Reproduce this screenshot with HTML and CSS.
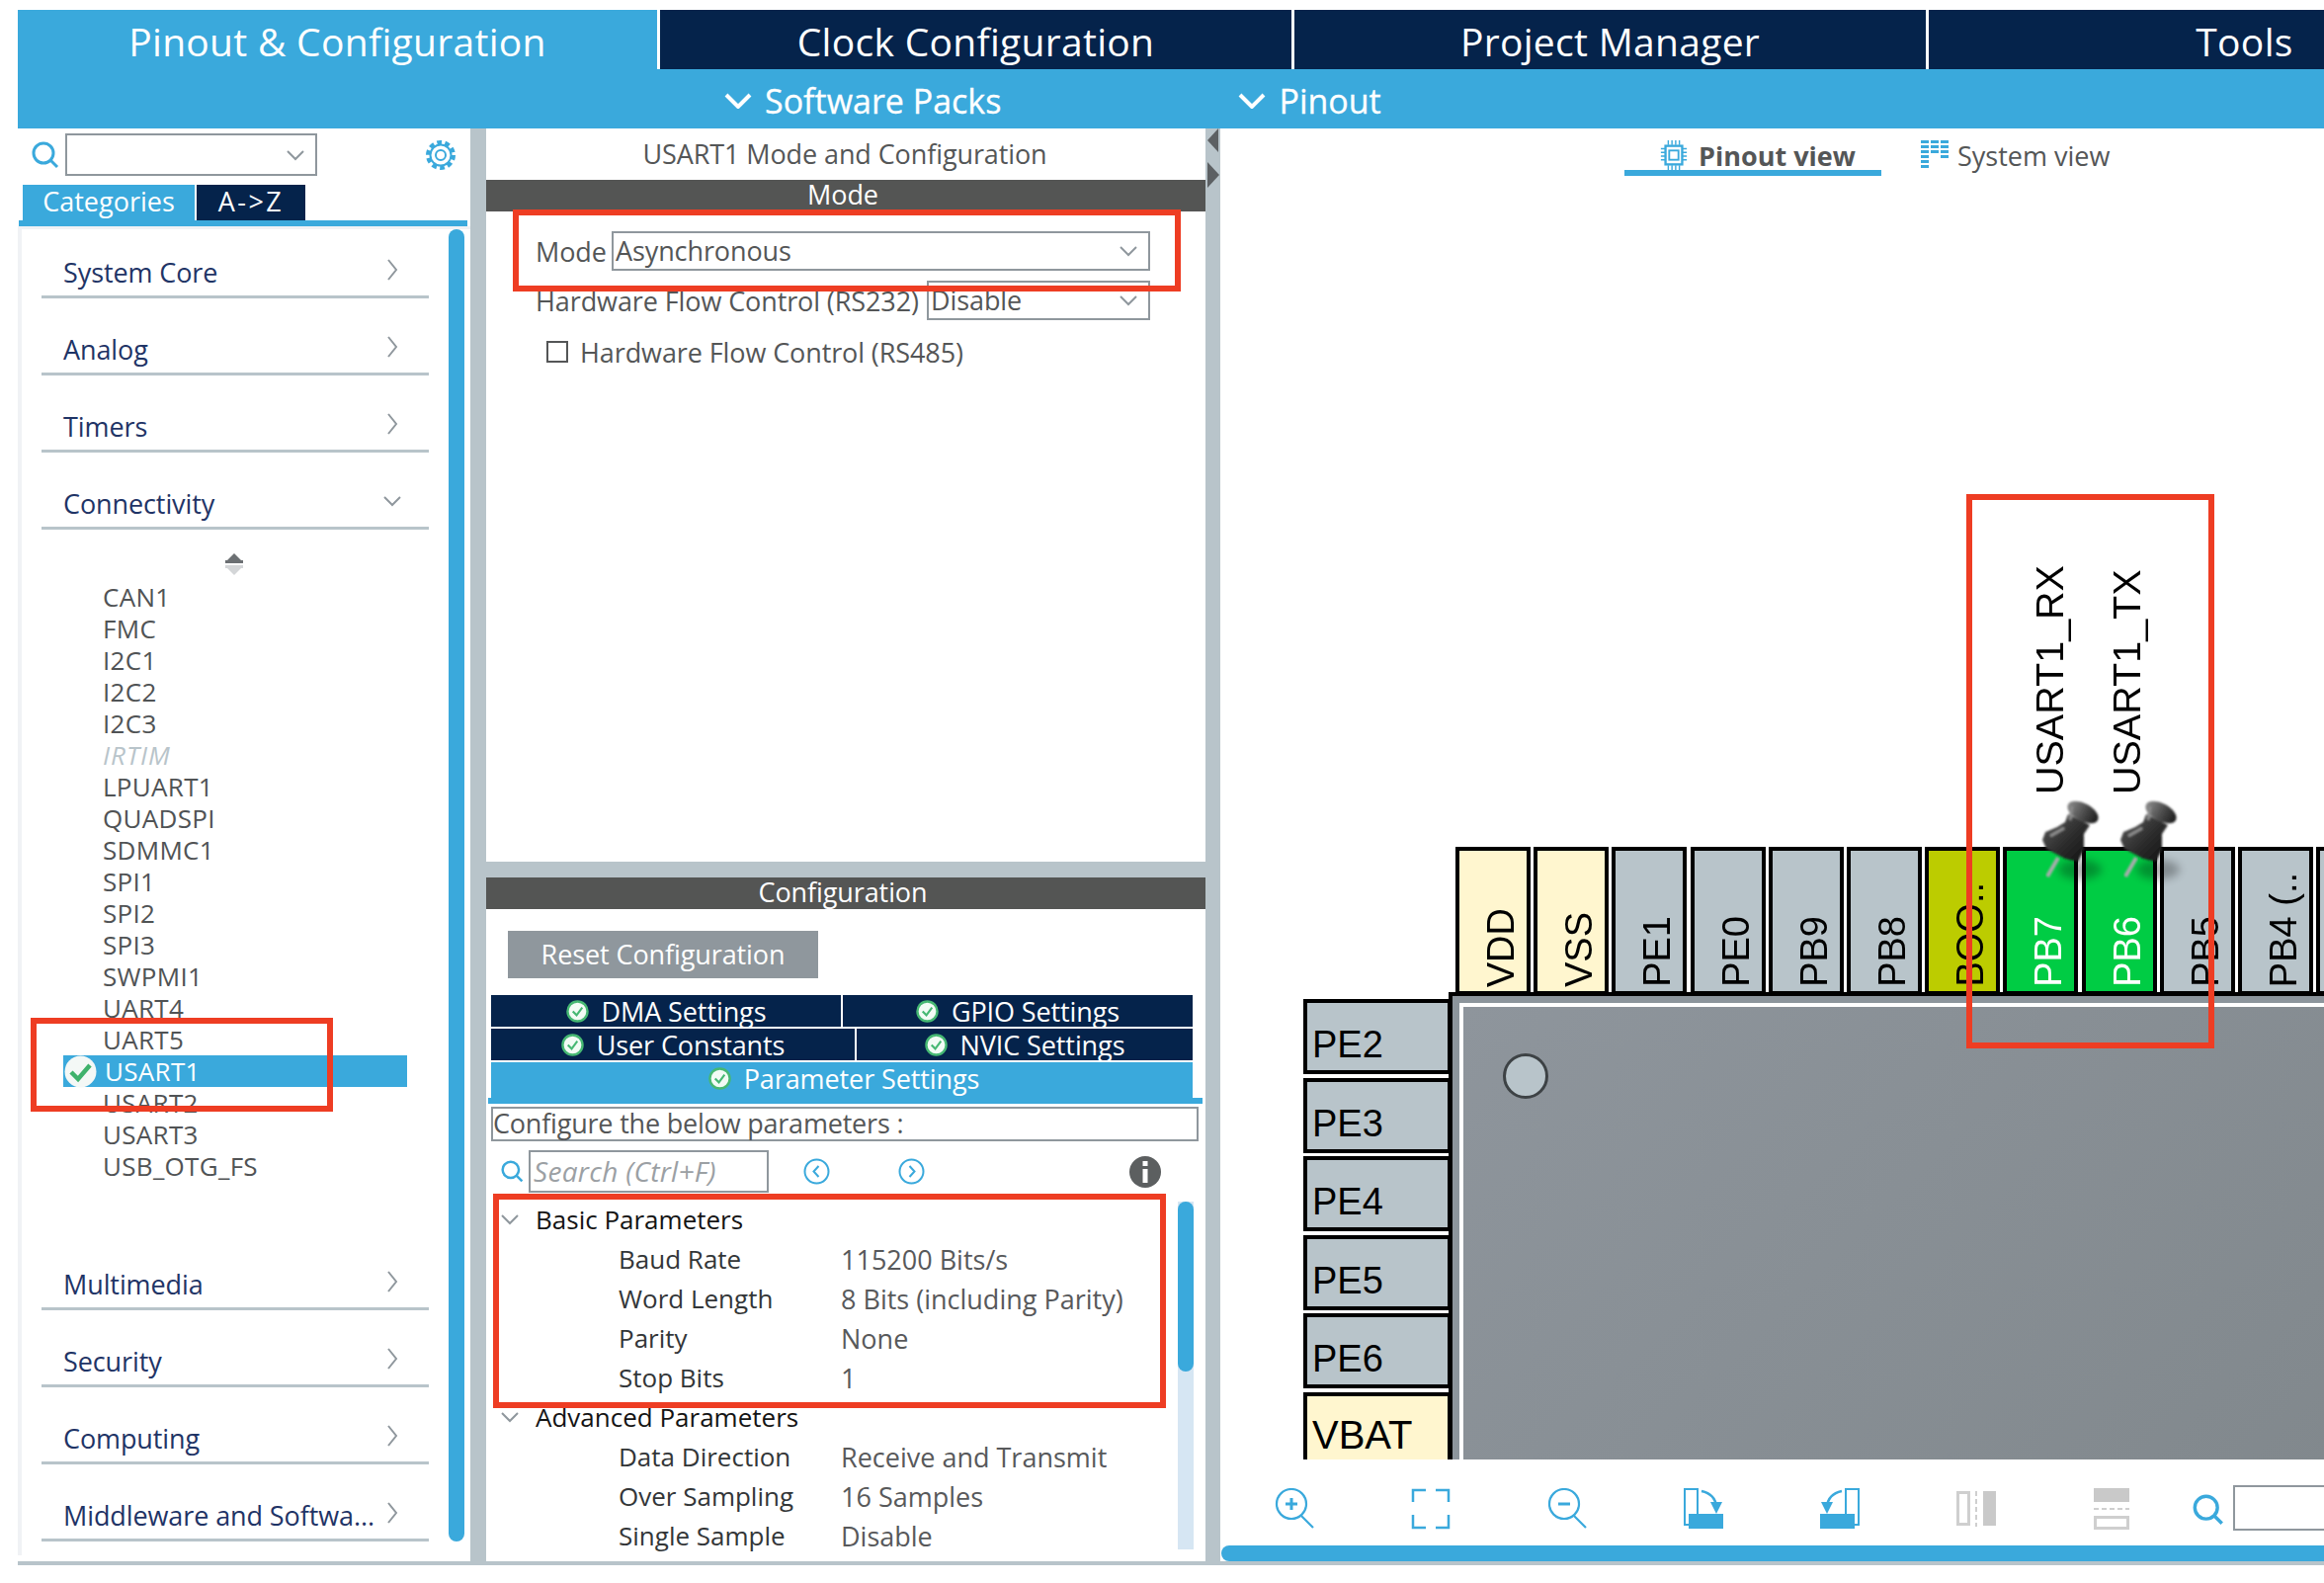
FILE: index.html
```html
<!DOCTYPE html>
<html lang="en">
<head>
<meta charset="utf-8">
<title>Pinout &amp; Configuration</title>
<link rel="stylesheet" href="styles.css">
</head>
<body>
<svg class="defs" width="0" height="0" aria-hidden="true">
  <defs>
    <symbol id="chev-d" viewBox="0 0 20 12"><path d="M2 2l8 8 8-8" fill="none" stroke="currentColor" stroke-width="2"/></symbol>
    <symbol id="chev-r" viewBox="0 0 12 24"><path d="M2 2l8 10-8 10" fill="none" stroke="currentColor" stroke-width="2"/></symbol>
    <symbol id="lens" viewBox="0 0 28 28"><circle cx="12" cy="12" r="10" fill="none" stroke="currentColor" stroke-width="3"/><path d="M19 19l7 7" stroke="currentColor" stroke-width="3"/></symbol>
    <symbol id="ok" viewBox="0 0 24 24"><circle cx="12" cy="12" r="10.5" fill="#f2fbf5" stroke="#46b873" stroke-width="2.5"/><path d="M7 12l4 4 6-8" fill="none" stroke="#46b873" stroke-width="2.2"/></symbol>
    <symbol id="needle-pin" viewBox="0 0 70 90">
      <ellipse cx="40" cy="72" rx="22" ry="10" fill="#000" opacity=".28" filter="url(#soft)"/>
      <path d="M18 60L7 79" stroke="#a8acac" stroke-width="4" filter="url(#tiny)"/>
      <g filter="url(#tiny)">
        <path d="M28 16L50 27 44 36 44 52 38 64 25 61 6 51 2 42 5 34 17 29 25 24z" fill="url(#pinshade)"/>
        <ellipse cx="43" cy="14" rx="17" ry="9" transform="rotate(28 43 14)" fill="url(#pincap)"/>
        <path d="M32 8L30 22" stroke="#8a8a8a" stroke-width="3"/>
        <path d="M10 38L24 30" stroke="#8f8f8f" stroke-width="3"/>
      </g>
    </symbol>
    <linearGradient id="pinshade" x1="0" y1="0" x2="1" y2="1"><stop offset="0" stop-color="#5c5c5c"/><stop offset=".55" stop-color="#2c2c2c"/><stop offset="1" stop-color="#111"/></linearGradient>
    <linearGradient id="pincap" x1="0" y1="0" x2="1" y2="0"><stop offset="0" stop-color="#8a8a8a"/><stop offset=".6" stop-color="#444"/><stop offset="1" stop-color="#1c1c1c"/></linearGradient>
    <filter id="soft" x="-50%" y="-50%" width="200%" height="200%"><feGaussianBlur stdDeviation="4"/></filter>
    <filter id="tiny" x="-10%" y="-10%" width="120%" height="120%"><feGaussianBlur stdDeviation=".8"/></filter>
  </defs>
</svg>

<div class="app">
  <header class="head">
    <nav class="tabs">
      <div class="tab tab-on">Pinout &amp; Configuration</div>
      <div class="tab">Clock Configuration</div>
      <div class="tab">Project Manager</div>
      <div class="tab">Tools</div>
    </nav>
    <div class="subbar">
      <div class="sub sub-packs"><svg class="sub-chev" viewBox="0 0 28 16"><path d="M2 2l12 12L26 2" fill="none" stroke="#fff" stroke-width="4"/></svg>Software Packs</div>
      <div class="sub sub-pinout"><svg class="sub-chev" viewBox="0 0 28 16"><path d="M2 2l12 12L26 2" fill="none" stroke="#fff" stroke-width="4"/></svg>Pinout</div>
    </div>
  </header>

  <main class="work">
    <aside class="left">
      <div class="find">
        <svg class="find-lens"><use href="#lens"/></svg>
        <div class="combo"><svg class="chev-sm"><use href="#chev-d"/></svg></div>
        <svg class="gear" viewBox="0 0 32 32">
          <circle cx="16" cy="16" r="12.5" fill="none" stroke="#3aa9dc" stroke-width="5" stroke-dasharray="4.6 3.25"/>
          <circle cx="16" cy="16" r="10.5" fill="#fff" stroke="#3aa9dc" stroke-width="2"/>
          <circle cx="16" cy="16" r="5" fill="none" stroke="#3aa9dc" stroke-width="2"/>
        </svg>
      </div>
      <div class="sort-tabs">
        <div class="stab stab-on">Categories</div>
        <div class="stab stab-az">A-&gt;Z</div>
      </div>
      <div class="sort-line"></div>
      <div class="tree">
        <div class="cat cat-first">System Core<svg class="cat-r"><use href="#chev-r"/></svg></div>
        <div class="cat">Analog<svg class="cat-r"><use href="#chev-r"/></svg></div>
        <div class="cat">Timers<svg class="cat-r"><use href="#chev-r"/></svg></div>
        <div class="cat">Connectivity<svg class="cat-d"><use href="#chev-d"/></svg></div>
        <svg class="sorter" viewBox="0 0 18 22"><path d="M9 0l7 7H2z" fill="#6c7073"/><rect x="0" y="7" width="18" height="3" fill="#6c7073"/><rect x="0" y="12" width="18" height="3" fill="#d4d6d8"/><path d="M2 15h14l-7 7z" fill="#d4d6d8"/></svg>
        <ul class="ips">
          <li>CAN1</li><li>FMC</li><li>I2C1</li><li>I2C2</li><li>I2C3</li>
          <li class="ip-off">IRTIM</li>
          <li>LPUART1</li><li>QUADSPI</li><li>SDMMC1</li><li>SPI1</li><li>SPI2</li><li>SPI3</li><li>SWPMI1</li><li>UART4</li><li>UART5</li>
          <li class="ip-on"><svg class="ip-ok" viewBox="0 0 33 33"><circle cx="16.500" cy="16.500" r="16" fill="#f4f8f6"/><path d="M7 17l7 7 12-14" fill="none" stroke="#3fb26b" stroke-width="4.500"/></svg>USART1</li>
          <li>USART2</li><li>USART3</li><li>USB_OTG_FS</li>
        </ul>
        <div class="cat cat-after">Multimedia<svg class="cat-r"><use href="#chev-r"/></svg></div>
        <div class="cat">Security<svg class="cat-r"><use href="#chev-r"/></svg></div>
        <div class="cat">Computing<svg class="cat-r"><use href="#chev-r"/></svg></div>
        <div class="cat">Middleware and Softwa...<svg class="cat-r"><use href="#chev-r"/></svg></div>
        <div class="tree-thumb"></div>
      </div>
    </aside>

    <section class="mid">
      <div class="mode-pane">
        <h2 class="pane-title">USART1 Mode and Configuration</h2>
        <div class="bar">Mode</div>
        <div class="frow frow-mode"><span>Mode</span><div class="sel sel-wide">Asynchronous<svg class="chev-sm"><use href="#chev-d"/></svg></div></div>
        <div class="frow frow-flow"><span>Hardware Flow Control (RS232)</span><div class="sel sel-narrow">Disable<svg class="chev-sm"><use href="#chev-d"/></svg></div></div>
        <div class="frow frow-check"><div class="check"></div><span>Hardware Flow Control (RS485)</span></div>
      </div>
      <div class="conf-pane">
        <div class="bar">Configuration</div>
        <div class="reset">Reset Configuration</div>
        <div class="ctabs">
          <div class="crow">
            <div class="ctab ctab-dma"><svg class="ok"><use href="#ok"/></svg>DMA Settings</div>
            <div class="ctab ctab-fill"><svg class="ok"><use href="#ok"/></svg>GPIO Settings</div>
          </div>
          <div class="crow">
            <div class="ctab ctab-user"><svg class="ok"><use href="#ok"/></svg>User Constants</div>
            <div class="ctab ctab-fill"><svg class="ok"><use href="#ok"/></svg>NVIC Settings</div>
          </div>
          <div class="ctab ctab-param"><svg class="ok"><use href="#ok"/></svg>Parameter Settings</div>
        </div>
        <div class="ctab-line"></div>
        <div class="hint">Configure the below parameters :</div>
        <div class="psearch">
          <svg class="psearch-lens"><use href="#lens"/></svg>
          <div class="psearch-box">Search (Ctrl+F)</div>
          <svg class="nav nav-prev" viewBox="0 0 27 27"><circle cx="13.500" cy="13.500" r="12" fill="none" stroke="#3aa9dc" stroke-width="2"/><path d="M15.500 8l-5 5.500 5 5.500" fill="none" stroke="#3aa9dc" stroke-width="2"/></svg>
          <svg class="nav nav-next" viewBox="0 0 27 27"><circle cx="13.500" cy="13.500" r="12" fill="none" stroke="#3aa9dc" stroke-width="2"/><path d="M11.500 8l5 5.500-5 5.500" fill="none" stroke="#3aa9dc" stroke-width="2"/></svg>
          <svg class="info" viewBox="0 0 32 32"><circle cx="16" cy="16" r="16" fill="#5c5f60"/><rect x="13.500" y="13" width="5" height="14" fill="#fff"/><rect x="13.500" y="5" width="5" height="5" fill="#fff"/></svg>
        </div>
        <div class="params">
          <div class="pgroup"><svg class="pchev"><use href="#chev-d"/></svg>Basic Parameters</div>
          <div class="prow"><span class="pname">Baud Rate</span><span class="pval">115200 Bits/s</span></div>
          <div class="prow"><span class="pname">Word Length</span><span class="pval">8 Bits (including Parity)</span></div>
          <div class="prow"><span class="pname">Parity</span><span class="pval">None</span></div>
          <div class="prow"><span class="pname">Stop Bits</span><span class="pval">1</span></div>
          <div class="pgroup"><svg class="pchev"><use href="#chev-d"/></svg>Advanced Parameters</div>
          <div class="prow"><span class="pname">Data Direction</span><span class="pval">Receive and Transmit</span></div>
          <div class="prow"><span class="pname">Over Sampling</span><span class="pval">16 Samples</span></div>
          <div class="prow"><span class="pname">Single Sample</span><span class="pval">Disable</span></div>
          <div class="ptrack"><div class="pthumb"></div></div>
        </div>
      </div>
      <svg class="split" viewBox="0 0 14 62"><path d="M12 0v24L1 12z" fill="#5c6063"/><path d="M1 34v26l12-13z" fill="#5c6063"/></svg>
    </section>

    <section class="right">
      <div class="views">
        <div class="view view-on">
          <svg class="view-ic" viewBox="0 0 28 32" fill="none" stroke="#3aa9dc">
            <rect x="5" y="6" width="18" height="20" stroke-width="2.500"/><rect x="9" y="11" width="10" height="10" stroke-width="2"/>
            <path d="M8 0v5M12 0v5M16 0v5M20 0v5M8 27v5M12 27v5M16 27v5M20 27v5M0 9h5M0 13h5M0 17h5M0 21h5M23 9h5M23 13h5M23 17h5M23 21h5" stroke-width="1.500"/>
          </svg>
          Pinout view
        </div>
        <div class="view view-sys">
          <svg class="view-ic" viewBox="0 0 28 30" fill="#3aa9dc"><rect width="8" height="3"/><rect y="5" width="8" height="3"/><rect y="10" width="8" height="3"/><rect y="15" width="8" height="3"/><rect y="20" width="8" height="3"/><rect y="25" width="8" height="3"/><rect x="10" width="8" height="3"/><rect x="10" y="5" width="8" height="3"/><rect x="10" y="10" width="8" height="3"/><rect x="20" width="8" height="3"/><rect x="20" y="5" width="8" height="3"/><rect x="20" y="10" width="8" height="3"/><rect x="20" y="15" width="8" height="3"/></svg>
          System view
        </div>
      </div>
      <div class="board">
        <div class="signal signal-rx">USART1_RX</div>
        <div class="signal signal-tx">USART1_TX</div>
        <div class="pins-top">
          <div class="pin pin-pwr"><span>VDD</span></div>
          <div class="pin pin-pwr"><span>VSS</span></div>
          <div class="pin"><span>PE1</span></div>
          <div class="pin"><span>PE0</span></div>
          <div class="pin"><span>PB9</span></div>
          <div class="pin"><span>PB8</span></div>
          <div class="pin pin-boot"><span>BOO..</span></div>
          <div class="pin pin-set"><span>PB7</span></div>
          <div class="pin pin-set"><span>PB6</span></div>
          <div class="pin"><span>PB5</span></div>
          <div class="pin"><span>PB4 (..</span></div>
          <div class="pin"></div>
        </div>
        <div class="pins-left">
          <div class="lpin">PE2</div>
          <div class="lpin">PE3</div>
          <div class="lpin">PE4</div>
          <div class="lpin">PE5</div>
          <div class="lpin">PE6</div>
          <div class="lpin lpin-pwr">VBAT</div>
        </div>
        <div class="chip"><div class="die"><div class="dot"></div></div></div>
        <svg class="pushpin pushpin-a"><use href="#needle-pin"/></svg>
        <svg class="pushpin pushpin-b"><use href="#needle-pin"/></svg>
      </div>
      <div class="tools">
        <div class="tool-set">
          <svg class="tool" viewBox="0 0 40 42" fill="none" stroke="#3aa9dc" stroke-width="2.200"><circle cx="17" cy="16" r="15"/><path d="M27 28l12 12"/><path d="M11 16h12M17 10v12" stroke-width="3"/></svg>
          <svg class="tool" viewBox="0 0 40 42" fill="none" stroke="#3aa9dc" stroke-width="2.500"><path d="M15 2H2v12M25 2h13v12M2 27v13h13M38 27v13H25"/></svg>
          <svg class="tool" viewBox="0 0 40 42" fill="none" stroke="#3aa9dc" stroke-width="2.200"><circle cx="17" cy="16" r="15"/><path d="M27 28l12 12"/><path d="M11 16h12" stroke-width="3"/></svg>
          <svg class="tool" viewBox="0 0 40 42"><path d="M1 1h13v36H1z" fill="none" stroke="#3aa9dc" stroke-width="2"/><rect x="5" y="26" width="35" height="15" fill="#3aa9dc"/><path d="M18 3q14 3 15 16" fill="none" stroke="#3aa9dc" stroke-width="2.500"/><path d="M27 14h12l-6 12z" fill="#3aa9dc"/></svg>
          <svg class="tool" viewBox="0 0 40 42"><path d="M39 1H26v36h13z" fill="none" stroke="#3aa9dc" stroke-width="2"/><rect x="0" y="26" width="35" height="15" fill="#3aa9dc"/><path d="M22 3Q8 6 7 19" fill="none" stroke="#3aa9dc" stroke-width="2.500"/><path d="M1 14h12L7 26z" fill="#3aa9dc"/></svg>
          <svg class="tool" viewBox="0 0 40 42"><rect x="1.500" y="4.500" width="11" height="32" fill="#fff" stroke="#cfcfcf" stroke-width="3"/><path d="M20 3v36" stroke="#cfcfcf" stroke-width="2" stroke-dasharray="5 3"/><rect x="27" y="3" width="13" height="35" fill="#c9c9c9"/></svg>
          <svg class="tool" viewBox="0 0 40 42"><rect x="1" y="0" width="36" height="14" fill="#c9c9c9"/><path d="M1 21h36" stroke="#cfcfcf" stroke-width="2" stroke-dasharray="5 3"/><rect x="2.500" y="29.500" width="33" height="11" fill="#fff" stroke="#cfcfcf" stroke-width="3"/></svg>
        </div>
        <div class="zoom-set">
          <svg class="zoom-lens"><use href="#lens"/></svg>
          <div class="zoom-box"></div>
        </div>
      </div>
      <div class="hscroll"></div>
    </section>
  </main>

  <div class="mark mark-usart"></div>
  <div class="mark mark-mode"></div>
  <div class="mark mark-params"></div>
  <div class="mark mark-pins"></div>
</div>
</body>
</html>
```

FILE: styles.css
```css
* { box-sizing: border-box; }
html, body { margin: 0; padding: 0; background: #fff; }
body { font-family: "Open Sans", "Noto Sans", sans-serif; color: #545657; overflow: hidden; }
.defs { position: absolute; }

.app { position: relative; margin: 10px 0 0 18px; width: 2334px; height: 1574px; overflow: hidden; border-bottom: 4px solid #b8c4ca; }

/* header */
.head { height: 120px; background: #3aa9dc; }
.tabs { display: flex; height: 60px; background: #fff; gap: 3px; overflow: hidden; }
.tab { flex: 0 0 639px; background: #05234b; color: #fff; font-size: 39px; letter-spacing: .3px; line-height: 63px; text-align: center; overflow: hidden; }
.tab-on { flex-basis: 647px; background: #3aa9dc; }
.subbar { display: flex; height: 60px; align-items: center; padding: 4px 0 0 715px; color: #fff; font-size: 34px; }
.sub { display: flex; align-items: center; gap: 13px; line-height: 1; -webkit-text-stroke: .3px #fff; }
.sub-chev { width: 28px; height: 16px; }
.sub-pinout { margin-left: 240px; }

/* layout */
.work { display: flex; height: 1450px; background: #b8c4ca; }
.left { position: relative; flex: 0 0 458px; background: #fff; }
.mid { position: relative; flex: 0 0 728px; margin-left: 16px; display: flex; flex-direction: column; }
.right { flex: 1; margin-left: 15px; background: #fff; display: flex; flex-direction: column; min-width: 0; }

/* left */
.find { display: flex; align-items: center; height: 57px; padding: 0 14px 4px; }
.find-lens { width: 28px; height: 28px; color: #3aa9dc; }
.combo { position: relative; width: 255px; height: 43px; margin-left: 6px; border: 2px solid #8f979d; }
.chev-sm { position: absolute; right: 10px; top: 50%; width: 20px; height: 12px; margin-top: -6px; color: #8f979d; }
.gear { width: 32px; height: 32px; margin-left: auto; }
.sort-tabs { display: flex; gap: 2px; height: 36px; padding-left: 5px; }
.stab { width: 110px; background: #05234b; color: #fff; font-size: 27px; line-height: 34px; text-align: center; }
.stab-on { width: 174px; background: #3aa9dc; }
.stab-az { letter-spacing: 2.500px; }
.sort-line { height: 6px; margin: 0 3px 0 1px; background: #3aa9dc; }
.tree { position: relative; height: 1345px; margin: 0; border-left: 4px solid #f0f2f5; border-top: 3px solid #f0f2f5; }
.cat { position: relative; height: 40px; margin: 38px 42px 0 20px; border-bottom: 3px solid #b8c4ca; padding-left: 22px; color: #1f3466; font-size: 27px; line-height: 28px; letter-spacing: -.1px; white-space: nowrap; }
.cat-first { margin-top: 30px; }
.cat-after { margin-top: 90px; }
.cat-r { position: absolute; right: 31px; top: -1px; width: 12px; height: 24px; color: #8f979d; }
.cat-d { position: absolute; right: 27px; top: 5px; width: 20px; height: 12px; color: #8f979d; }
.sorter { display: block; width: 18px; height: 22px; margin: 24px 0 6px 206px; }
.ips { list-style: none; margin: 0 64px 0 42px; padding: 0; font-size: 26px; color: #505355; }
.ips li { height: 32px; padding-left: 40px; line-height: 32px; letter-spacing: .3px; }
.ips .ip-off { color: #b8c4ca; font-style: italic; letter-spacing: 1px; }
.ips .ip-on { position: relative; background: #3aa9dc; color: #fff; padding-left: 42px; }
.ip-ok { position: absolute; left: 1px; top: 0; width: 33px; height: 33px; }
.tree-thumb { position: absolute; left: 432px; top: 0; width: 16px; height: 1328px; border-radius: 8px; background: #3aa9dc; }

/* mid */
.mode-pane { height: 742px; background: #fff; }
.pane-title { margin: 0; height: 52px; padding-right: 2px; font-size: 27px; font-weight: 400; line-height: 52px; text-align: center; letter-spacing: -.1px; }
.bar { height: 32px; padding-right: 6px; background: #545554; color: #fff; font-size: 27px; line-height: 30px; letter-spacing: -.1px; text-align: center; }
.frow { display: flex; align-items: center; padding: 0 56px 0 50px; font-size: 27px; letter-spacing: -.1px; white-space: nowrap; }
.sel { position: relative; flex: none; height: 40px; margin-left: auto; padding-left: 2px; border: 2px solid #8f979d; line-height: 36px; }
.sel-wide { width: 545px; }
.sel-narrow { width: 226px; }
.frow-mode { margin-top: 20px; }
.frow-flow { margin-top: 10px; }
.frow-check { margin-top: 19px; padding-left: 61px; height: 26px; }
.check { width: 22px; height: 22px; margin-right: 12px; border: 2px solid #545657; }

.conf-pane { flex: 1; margin-top: 16px; background: #fff; position: relative; }
.reset { width: 314px; height: 48px; margin: 22px 0 0 22px; background: #8f979d; color: #fff; font-size: 27px; line-height: 47px; text-align: center; letter-spacing: -.1px; }
.ctabs { margin: 17px 13px 0 5px; display: flex; flex-direction: column; gap: 2px; }
.crow { display: flex; gap: 2px; height: 32px; }
.ctab { display: flex; align-items: center; justify-content: center; gap: 13px; background: #05234b; color: #fff; font-size: 27px; letter-spacing: -.1px; line-height: 1; white-space: nowrap; }
.ctab-dma { flex: 0 0 354px; }
.ctab-user { flex: 0 0 368px; }
.ctab-fill { flex: 1; }
.ctab-param { height: 36px; background: #3aa9dc; padding: 0 0 4px 4px; }
.ok { width: 23px; height: 23px; flex: none; }
.ctab-line { height: 6px; margin: 0 3px 0 2px; background: #3aa9dc; }
.hint { height: 35px; margin: 3px 7px 0 5px; border: 2px solid #8f979d; font-size: 27px; line-height: 30px; letter-spacing: -.2px; white-space: nowrap; }
.psearch { position: relative; display: flex; align-items: center; height: 60px; padding: 9px 0 8px 15px; }
.psearch-lens { width: 23px; height: 23px; color: #3aa9dc; }
.psearch-box { width: 243px; height: 43px; margin-left: 5px; border: 2px solid #8f979d; color: #9ba0a4; font-size: 28px; font-style: italic; line-height: 38px; padding-left: 3px; letter-spacing: .3px; white-space: nowrap; overflow: hidden; }
.nav { width: 27px; height: 27px; margin-left: 35px; }
.nav-next { margin-left: 69px; }
.info { width: 32px; height: 32px; margin-left: 207px; }
.params { position: relative; height: 358px; overflow: hidden; font-size: 26px; }
.pgroup { display: flex; align-items: center; height: 40px; padding: 0 0 2px 14px; color: #141414; gap: 16px; }
.pchev { width: 20px; height: 12px; color: #8f979d; }
.prow { display: flex; align-items: center; height: 40px; padding: 0 0 2px 134px; line-height: 1; }
.pname { width: 225px; color: #333638; }
.pval { color: #58595b; font-size: 27px; letter-spacing: 0; }
.ptrack { position: absolute; left: 700px; top: 1px; width: 16px; height: 352px; background: #d6e6f3; }
.pthumb { height: 172px; border-radius: 8px; background: #3aa9dc; }
.split { position: absolute; right: -15px; top: 0; width: 14px; height: 62px; }

/* right */
.views { display: flex; height: 48px; padding-left: 409px; font-size: 27px; flex: none; }
.view { display: flex; align-items: center; gap: 11px; }
.view-on { width: 260px; height: 48px; padding: 12px 0 0 36px; font-weight: 700; border-bottom: 6px solid #3aa9dc; margin-right: 40px; }
.view-sys { gap: 9px; padding-top: 6px; }
.view-ic { width: 28px; height: 30px; }
.board { position: relative; height: 1299px; flex: none; overflow: hidden; font-family: "Liberation Sans", Arial, sans-serif; color: #000; font-size: 38px; }
.signal { position: absolute; top: 386px; height: 240px; font-size: 39.500px; writing-mode: vertical-rl; transform: rotate(180deg); line-height: 38px; white-space: nowrap; }
.signal-rx { left: 820px; }
.signal-tx { left: 898px; }
.pins-top { position: absolute; left: 238px; top: 679px; display: flex; gap: 3.2px; }
.pin { flex: 0 0 76px; height: 150px; display: flex; justify-content: center; align-items: flex-end; padding: 0 0 4px 16px; background: #b8c4ca; border: 4px solid #000; }
.pin span { writing-mode: vertical-rl; transform: rotate(180deg); line-height: 1; white-space: nowrap; }
.pin-pwr { background: #fff6cf; }
.pin-boot { background: #bccc00; }
.pin-set { background: #00cc44; color: #fff; }
.pins-left { position: absolute; left: 84px; top: 833px; display: flex; flex-direction: column; gap: 3.500px; }
.lpin { width: 150px; height: 76px; display: flex; align-items: flex-end; padding: 0 0 7px 5px; background: #b8c4ca; border: 4px solid #000; line-height: 1; }
.lpin-pwr { background: #fff6cf; font-size: 40px; padding-bottom: 9px; }
.chip { position: absolute; left: 231px; top: 826px; width: 1000px; height: 800px; padding: 7px 0 0 7px; background: #8c959c; border: solid #000; border-width: 4px 0 0 4px; }
.die { width: 100%; height: 100%; padding: 47px 0 0 40px; background: linear-gradient(135deg, #8e959c, #7d8488); border: solid #fff; border-width: 4px 0 0 4px; }
.dot { width: 46px; height: 46px; border-radius: 50%; background: #b8c4ca; border: 3px solid #3d4245; }
.pushpin { position: absolute; top: 630px; width: 70px; height: 90px; overflow: visible; }
.pushpin-a { left: 830px; }
.pushpin-b { left: 909px; }

.tools { display: flex; align-items: flex-start; flex: 1; padding: 29px 0 0 55px; min-height: 0; }
.tool-set { display: flex; gap: 98px; }
.tool { display: block; width: 40px; height: 42px; flex: none; }
.zoom-set { display: flex; margin-left: 61px; gap: 9px; }
.zoom-lens { width: 32px; height: 36px; color: #3aa9dc; margin-top: 4px; }
.zoom-box { width: 100px; height: 46px; margin-top: -3px; border: 2px solid #8f979d; }
.hscroll { flex: none; height: 16px; margin-left: 1px; border-radius: 8px 0 0 8px; background: #3aa9dc; }

/* annotation frames */
.mark { position: absolute; border: 6px solid #ee3d23; pointer-events: none; }
.mark-usart { left: 13px; top: 1020px; width: 306px; height: 95px; }
.mark-mode { left: 501px; top: 202px; width: 676px; height: 83px; }
.mark-params { left: 481px; top: 1198px; width: 681px; height: 217px; }
.mark-pins { left: 1972px; top: 490px; width: 251px; height: 561px; }
```
